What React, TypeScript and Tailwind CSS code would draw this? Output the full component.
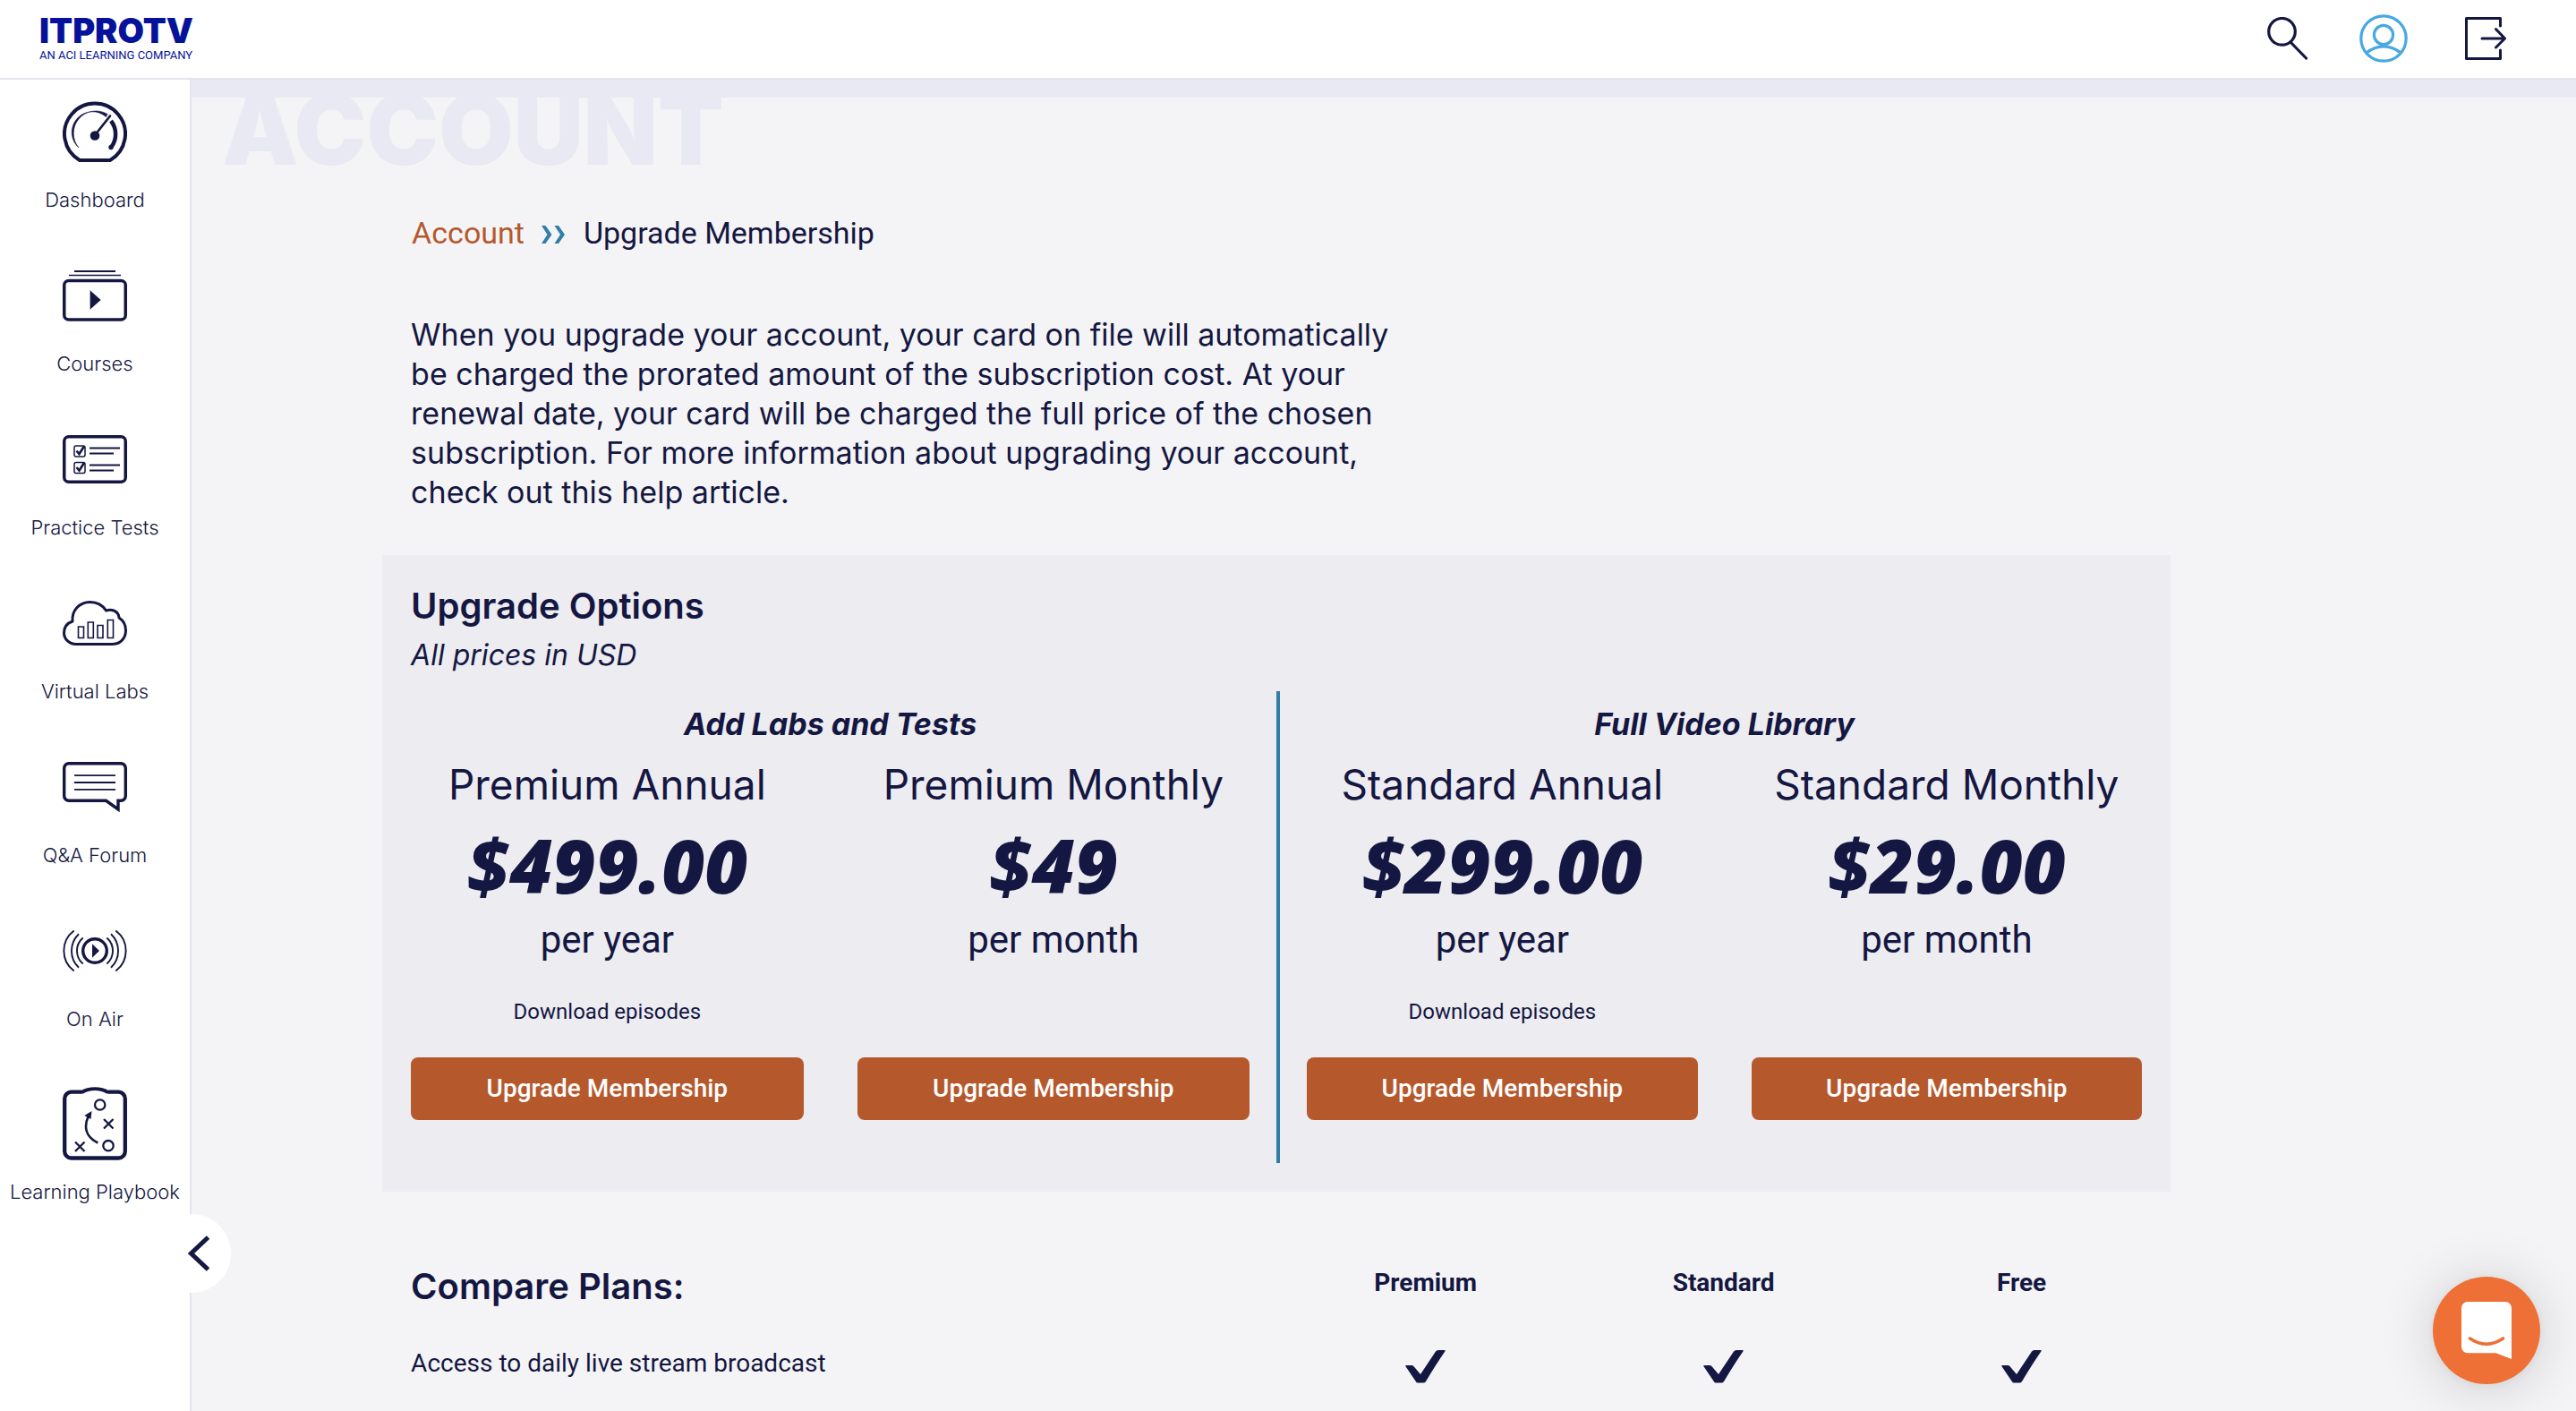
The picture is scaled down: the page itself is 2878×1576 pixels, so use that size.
import type { ReactNode } from "react";

function DashboardIcon() {
  return (
    <svg width="72" height="68" viewBox="0 0 72 68" fill="none" stroke="currentColor" aria-hidden="true">
      <path d="M19 66A34 34 0 1 1 53 66Z" strokeWidth="4" strokeLinejoin="round" />
      <path d="M18 52A25 25 0 0 1 50 14.5L48.500 17.500A22.500 22.500 0 0 0 18 52Z" fill="currentColor" stroke="currentColor" strokeWidth="0.600" />
      <path d="M54 22A24 24 0 0 1 54.500 51" strokeWidth="4.500" />
      <circle cx="54" cy="51.500" r="2.700" fill="currentColor" stroke="none" />
      <path d="M36 38L53 16.500" strokeWidth="2.700" strokeLinecap="round" />
      <circle cx="36" cy="38.500" r="5.300" fill="currentColor" stroke="none" />
    </svg>
  );
}

function CoursesIcon() {
  return (
    <svg width="72" height="57" viewBox="0 0 72 57" fill="none" stroke="currentColor" aria-hidden="true">
      <path d="M13 1H59" strokeWidth="1.800" />
      <path d="M7 5.500H65" strokeWidth="1.600" />
      <rect x="1.750" y="11.500" width="68.500" height="43.500" rx="5" strokeWidth="3.500" />
      <path d="M30.600 22.300V43.700L42.600 33Z" fill="currentColor" stroke="none" />
    </svg>
  );
}

function PracticeTestsIcon() {
  return (
    <svg width="72" height="54" viewBox="0 0 72 54" fill="none" stroke="currentColor" aria-hidden="true">
      <rect x="1.750" y="1.750" width="68.500" height="50.500" rx="5" strokeWidth="3.500" />
      <rect x="13" y="12" width="12" height="12" rx="2" strokeWidth="1.500" />
      <rect x="13" y="30.500" width="12" height="12" rx="2" strokeWidth="1.500" />
      <path d="M15.500 17.500L18.500 21L24 12.500M15.500 36L18.500 39.500L24 31" strokeWidth="2.600" />
      <path d="M30 14.500H64M30 20.500H57M30 33.500H64M30 39.500H57" strokeWidth="1.800" />
    </svg>
  );
}

function VirtualLabsIcon() {
  return (
    <svg width="72" height="50" viewBox="0 0 72 50" fill="none" stroke="currentColor" aria-hidden="true">
      <path
        d="M15 48.500C7 48.500 1.500 42.500 1.500 36C1.500 29.500 5 25 11 23C10 10.500 19 1.500 30.500 1.500C39 1.500 45 5.500 48.500 11C55 8.500 62.500 12 63 19C67.500 22 70.500 26.500 70.500 33C70.500 42.500 64 48.500 55 48.500Z"
        strokeWidth="3"
        strokeLinejoin="round"
      />
      <path d="M17.500 29H23.500V41.500H17.500ZM28.300 24H34.300V41.500H28.300ZM39 27.500H45V41.500H39ZM50.300 21.500H56.500V41.500H50.300Z" strokeWidth="1.600" />
    </svg>
  );
}

function ForumIcon() {
  return (
    <svg width="72" height="56" viewBox="0 0 72 56" fill="none" stroke="currentColor" aria-hidden="true">
      <path d="M7 1.700H65A5.200 5.200 0 0 1 70.300 7V38A5.200 5.200 0 0 1 65 43.300H62V53L48.500 43.300H7A5.200 5.200 0 0 1 1.700 38V7A5.200 5.200 0 0 1 7 1.700Z" strokeWidth="3.400" />
      <path d="M13 15.200H59M13 23H59M13 30.800H59" strokeWidth="1.800" />
    </svg>
  );
}

function OnAirIcon() {
  return (
    <svg width="72" height="46" viewBox="0 0 72 46" fill="none" stroke="currentColor" aria-hidden="true">
      <circle cx="36" cy="23" r="13.300" strokeWidth="3.400" />
      <path d="M33 15.300V30.700L41 23Z" fill="currentColor" stroke="none" />
      <path
        d="M49.300 8.500A19 19 0 0 1 49.300 37.500M54 4.200A26 26 0 0 1 54 41.800M59.300 0.500A28 28 0 0 1 59.300 45.500M22.700 8.500A19 19 0 0 0 22.700 37.500M18 4.200A26 26 0 0 0 18 41.800M12.700 0.500A28 28 0 0 0 12.700 45.500"
        strokeWidth="1.900"
      />
    </svg>
  );
}

function PlaybookIcon() {
  return (
    <svg width="72" height="82" viewBox="0 0 72 82" fill="none" stroke="currentColor" aria-hidden="true">
      <path d="M21 5.700H9.500A7.500 7.500 0 0 0 2.200 13V72A7.500 7.500 0 0 0 9.500 79.500H62.500A7.500 7.500 0 0 0 69.800 72V13A7.500 7.500 0 0 0 62.500 5.700H51" strokeWidth="4.300" />
      <path d="M20 4.500Q27 0.300 36 0.300T52 4.500V7.500H49Q44 4 36 4T23 7.500H20Z" fill="currentColor" stroke="none" />
      <circle cx="41.700" cy="20" r="5.700" strokeWidth="2.300" />
      <circle cx="51" cy="65.700" r="5.700" strokeWidth="2.300" />
      <path d="M46 36L56.500 46.500M56.500 36L46 46.500M14 61.500L24.500 72M24.500 61.500L14 72" strokeWidth="2.300" />
      <path d="M39.300 62.500C26 56 23 45 29 32" strokeWidth="2.700" />
      <path d="M32.500 27L24.300 32L31.500 36Z" fill="currentColor" stroke="none" />
    </svg>
  );
}

function CheckMark() {
  return (
    <svg width="45" height="37" viewBox="0 0 45 37" fill="currentColor" role="img" aria-label="Included" className="mx-auto mt-[3px] block">
      <path d="M1 17H7.500Q9 17 9.800 18.500L17 27L34 1.500Q35 0 37 0H44Q45.200 0 44.500 1.200Q33 18 23 35Q22 36.500 20 36.500H14Q12.500 36.500 11.800 35L0.300 18Q0 17 1 17Z" />
    </svg>
  );
}

const navItems: { label: string; icon: ReactNode }[] = [
  { label: "Dashboard", icon: <DashboardIcon /> },
  { label: "Courses", icon: <CoursesIcon /> },
  { label: "Practice Tests", icon: <PracticeTestsIcon /> },
  { label: "Virtual Labs", icon: <VirtualLabsIcon /> },
  { label: "Q&A Forum", icon: <ForumIcon /> },
  { label: "On Air", icon: <OnAirIcon /> },
];

type Plan = { name: string; price: string; period: string; note?: string };

const plans: { title: string; options: Plan[] }[] = [
  {
    title: "Add Labs and Tests",
    options: [
      { name: "Premium Annual", price: "$499.00", period: "per year", note: "Download episodes" },
      { name: "Premium Monthly", price: "$49", period: "per month" },
    ],
  },
  {
    title: "Full Video Library",
    options: [
      { name: "Standard Annual", price: "$299.00", period: "per year", note: "Download episodes" },
      { name: "Standard Monthly", price: "$29.00", period: "per month" },
    ],
  },
];

function Header() {
  return (
    <header className="flex h-[89px] items-start justify-between border-b-2 border-[#e4e4ec] bg-white pr-[78px] pl-11">
      <a href="#home" className="flex flex-col pt-4 text-[#06129a]">
        <span className="text-[38px] leading-9 font-black">ITPROTV</span>
        <span className="font-[Roboto,sans-serif] text-[13px] leading-5">AN ACI LEARNING COMPANY</span>
      </a>
      <div className="flex h-[86px] items-center gap-[57px]">
        <button type="button" aria-label="Search">
          <svg width="46" height="48" viewBox="0 0 46 48" fill="none" stroke="currentColor" strokeWidth="3.200" strokeLinecap="round">
            <circle cx="16.500" cy="16.300" r="14.800" />
            <path d="M26.500 28.500L43.500 46" />
          </svg>
        </button>
        <button type="button" aria-label="Profile" className="text-[#47a8e2]">
          <svg width="54" height="56" viewBox="0 0 54 56" fill="none" stroke="currentColor" strokeWidth="3.200">
            <circle cx="27" cy="28" r="25.200" />
            <circle cx="27" cy="24" r="10.600" />
            <path d="M8 44Q16.500 36.800 27 36.800T46 44" />
          </svg>
        </button>
        <button type="button" aria-label="Log out" className="ml-[7px]">
          <svg width="46" height="48" viewBox="0 0 46 48" fill="none" stroke="currentColor" strokeWidth="3">
            <path d="M39.500 10V1.500H1.500V46.500H39.500V37" strokeLinecap="round" strokeLinejoin="round" />
            <path d="M19 24H44.500M34.500 13.500L44.500 24L34.500 34" strokeLinecap="round" strokeLinejoin="round" />
          </svg>
        </button>
      </div>
    </header>
  );
}

function Sidebar() {
  return (
    <nav aria-label="Main" className="relative w-[214px] shrink-0 border-r-2 border-[#e4e4ec] bg-white pt-[22px]">
      <ul className="flex flex-col gap-[55px] text-center text-[22px] leading-8 font-light">
        {navItems.map((item) => (
          <li key={item.label}>
            <a href="#nav" className="flex flex-col items-center gap-6">
              <span className="flex h-[72px] items-center">{item.icon}</span>
              {item.label}
            </a>
          </li>
        ))}
        <li>
          <a href="#nav" className="flex flex-col items-center gap-[14px] whitespace-nowrap">
            <span className="flex h-[92px] items-center">
              <PlaybookIcon />
            </span>
            Learning Playbook
          </a>
        </li>
      </ul>
      <button
        type="button"
        aria-label="Collapse menu"
        className="absolute top-[1267px] -right-[46px] flex size-[88px] items-center justify-center rounded-full bg-white"
      >
        <svg width="24" height="40" viewBox="0 0 24 40" fill="none" stroke="currentColor" strokeWidth="5" className="mr-[-16px]">
          <path d="M22.500 2L3.500 20L22.500 38" />
        </svg>
      </button>
    </nav>
  );
}

function PlanCard({ plan }: { plan: Plan }) {
  return (
    <div className="flex flex-col text-center">
      <h4 className="text-[46px] leading-14">{plan.name}</h4>
      <p className="mt-[14px] font-['Open_Sans',sans-serif] text-[83px] leading-24 font-extrabold italic">{plan.price}</p>
      <p className="mt-3 font-[Roboto,sans-serif] text-[42px] leading-12">{plan.period}</p>
      <p className="mt-10 min-h-8 font-[Roboto,sans-serif] text-[24px] leading-8">{plan.note}</p>
      <button type="button" className="mt-[35px] h-[70px] rounded-lg bg-[#b5592d] font-[Roboto,sans-serif] text-[28px] font-medium text-white">
        Upgrade Membership
      </button>
    </div>
  );
}

export default function App() {
  return (
    <div className="flex min-h-screen flex-col bg-[#f4f4f6] font-[Inter,sans-serif] text-[#141741]">
      <Header />
      <div className="flex flex-1">
        <Sidebar />
        <main className="min-w-0 flex-1 border-t-20 border-[#e9e9f3]">
          <h1 className="h-20 pl-[34px] text-[108px] leading-[72px] font-black text-[#e9e9f3]">ACCOUNT</h1>
          <div className="ml-[8%] w-3/4">
            <nav aria-label="Breadcrumb" className="mt-[51px] flex items-center pl-[33px] font-[Roboto,sans-serif] text-[34px] leading-10">
              <a href="#account" className="text-[#b5592d]">
                Account
              </a>
              <svg width="28" height="20" viewBox="0 0 28 20" fill="#327ea6" aria-hidden="true" className="mt-1 mr-[19px] ml-[19px]">
                <path d="M0 0H4.500L11.500 10L4.500 20H0L6.500 10ZM14.500 0H19L26 10L19 20H14.500L21 10Z" />
              </svg>
              <span>Upgrade Membership</span>
            </nav>
            <p className="mt-18 ml-8 max-w-[1100px] text-[34px] leading-11">
              When you upgrade your account, your card on file will automatically be charged the prorated amount of the subscription cost.
              At your renewal date, your card will be charged the full price of the chosen subscription. For more information about
              upgrading your account, check out this help article.
            </p>

            <section className="mt-12 bg-[#edecf1] p-8">
              <h2 className="pt-px text-[40px] leading-12 font-semibold">Upgrade Options</h2>
              <p className="mt-[11px] text-[32px] leading-10 italic">All prices in USD</p>
              <div className="mt-5 grid grid-cols-2">
                {plans.map((group, i) => (
                  <div key={group.title} className={i === 0 ? "pt-[17px] pr-[30px] pb-12" : "border-l-4 border-[#327ea6] pt-[17px] pb-12 pl-[30px]"}>
                    <h3 className="text-center text-[34px] leading-10 font-bold italic">{group.title}</h3>
                    <div className="mt-[19px] grid grid-cols-2 gap-[60px]">
                      {group.options.map((plan) => (
                        <PlanCard key={plan.name} plan={plan} />
                      ))}
                    </div>
                  </div>
                ))}
              </div>
            </section>

            <table className="mt-[82px] w-full table-fixed font-[Roboto,sans-serif] text-[28px]">
              <thead>
                <tr className="align-top">
                  <th className="w-1/2 pl-8 text-left font-[Inter,sans-serif] text-[40px] leading-12 font-semibold">Compare Plans:</th>
                  <th className="pt-1 leading-8 font-bold">Premium</th>
                  <th className="pt-1 leading-8 font-bold">Standard</th>
                  <th className="pt-1 leading-8 font-bold">Free</th>
                </tr>
              </thead>
              <tbody>
                <tr className="align-top leading-9">
                  <th scope="row" className="pt-11 pb-6 pl-8 text-left font-normal">
                    Access to daily live stream broadcast
                  </th>
                  <td className="pt-11">
                    <CheckMark />
                  </td>
                  <td className="pt-11">
                    <CheckMark />
                  </td>
                  <td className="pt-11">
                    <CheckMark />
                  </td>
                </tr>
              </tbody>
            </table>
          </div>
        </main>
      </div>

      <button
        type="button"
        aria-label="Open chat"
        className="fixed right-10 bottom-[30px] flex size-[120px] items-center justify-center rounded-full bg-[#ee7036] shadow-[0_2px_12px_rgba(0,0,0,0.06),0_4px_64px_rgba(0,0,0,0.16)]"
      >
        <svg width="56" height="64" viewBox="0 0 56 64" aria-hidden="true">
          <path d="M7 0H49A7 7 0 0 1 56 7V64L38.500 57.300H7A7 7 0 0 1 0 50.300V7A7 7 0 0 1 7 0Z" fill="#fff" />
          <path d="M9.500 41Q27.800 53.500 46.500 41" fill="none" stroke="#ee7036" strokeWidth="3.600" strokeLinecap="round" />
        </svg>
      </button>
    </div>
  );
}
